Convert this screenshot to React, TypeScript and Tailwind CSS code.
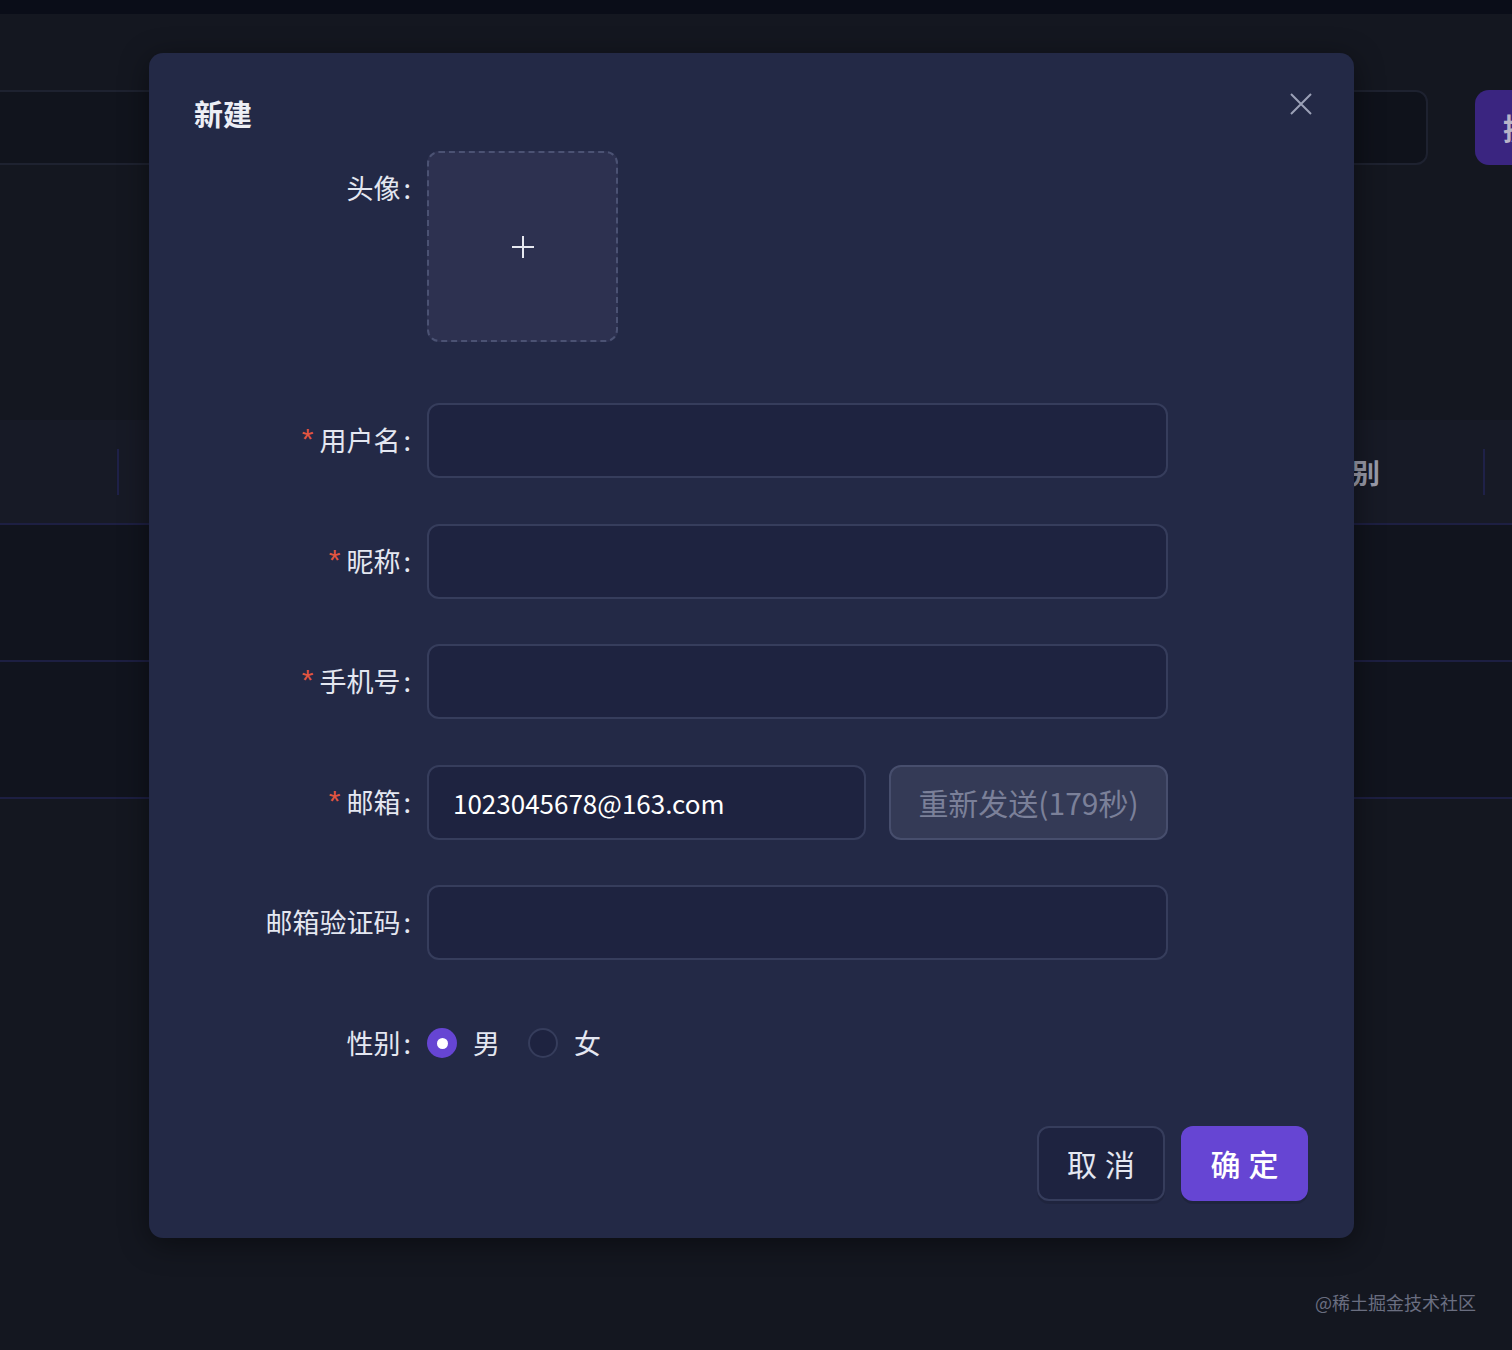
import React from "react";

const font = {
  fontFamily: '"Noto Sans CJK SC", "Noto Sans", sans-serif',
};

const fields = [
  { label: "用户名", required: true },
  { label: "昵称", required: true },
  { label: "手机号", required: true },
];

function Label({ text, required }: { text: string; required?: boolean }) {
  return (
    <div className="flex h-[75px] w-[278px] shrink-0 items-center justify-end pr-[16px] text-[27px] text-[#e4e7f1]">
      {required && (
        <span className="mr-[6px] mt-[-4px] font-['Liberation_Sans',sans-serif] text-[30px] text-[#e25540]">*</span>
      )}
      <span>{text}</span>
      <span className="ml-[3px]">:</span>
    </div>
  );
}

function TextInput({ value }: { value?: string }) {
  return (
    <div className="flex h-[75px] w-full items-center rounded-[12px] border-2 border-[#363d5c] bg-[#1e2340] px-[24px] text-[26px] text-white">
      {value}
    </div>
  );
}

export default function App() {
  return (
    <div className="relative h-[1350px] w-full overflow-hidden bg-[#141720]" style={font}>
      {/* background page (behind the mask) */}
      <div className="h-[14px] bg-[#0a0d18]" />
      <div className="mt-[76px] flex h-[75px] items-stretch">
        <div className="ml-[-20px] w-[700px] rounded-[12px] border-2 border-[#1e2230] bg-[#11141d]" />
        <div className="flex-1" />
        <div className="w-[300px] rounded-[12px] border-2 border-[#1e2230] bg-[#0f121b]" />
        <div className="ml-[47px] mr-[-123px] flex w-[160px] items-center rounded-[14px] bg-[#3a2580] pl-[28px] text-[30px] font-bold text-[#b8b4c8]">
          提交
        </div>
      </div>

      <div className="mt-[255px]">
        <div className="flex h-[105px] items-center justify-between border-b-2 border-[#1d1f42] bg-[#171a26] pl-[117px] pr-[27px] text-[28px] font-bold text-[#9a9cab]">
          <div className="h-[46px] w-[2px] bg-[#1f2148]" />
          <div className="flex items-center gap-[103px]">
            <span>性别</span>
            <div className="h-[46px] w-[2px] bg-[#1f2148]" />
          </div>
        </div>
        <div className="h-[137px] border-b-2 border-[#1d1f42] bg-[#11141e]" />
        <div className="h-[137px] border-b-2 border-[#1d1f42] bg-[#11141e]" />
      </div>

      <div className="absolute bottom-[34px] right-[36px] text-[18px] text-[#6a6e80]">@稀土掘金技术社区</div>

      {/* modal */}
      <div className="absolute inset-0 pl-[149px] pt-[53px]">
        <div className="relative h-[1185px] w-[1205px] rounded-[14px] bg-[#232946] pt-[38px] shadow-[0_6px_30px_rgba(0,0,0,0.45)]">
          <button className="absolute right-[42px] top-[40px] text-[#9ba1b7]" aria-label="close">
            <svg width="22" height="22" viewBox="0 0 22 22" fill="none" stroke="currentColor" strokeWidth="2">
              <path d="M1 1L21 21M21 1L1 21" />
            </svg>
          </button>

          <h2 className="pl-[45px] text-[29px] font-bold leading-[44px] text-[#eceef5]">新建</h2>

          <div className="mt-[16px] flex flex-col">
            <div className="flex items-start">
              <Label text="头像" />
              <div className="flex h-[191px] w-[191px] items-center justify-center rounded-[12px] border-2 border-dashed border-[#4b5273] bg-[#2d3150]">
                <svg width="24" height="24" viewBox="0 0 24 24" fill="none" stroke="#e6e8f0" strokeWidth="2">
                  <path d="M12 1V23M1 12H23" />
                </svg>
              </div>
            </div>

            <div className="mt-[61px] flex flex-col gap-[45.5px] pr-[186px]">
              {fields.map((f) => (
                <div key={f.label} className="flex items-center">
                  <Label text={f.label} required={f.required} />
                  <TextInput />
                </div>
              ))}

              <div className="flex items-center">
                <Label text="邮箱" required />
                <div className="flex w-full gap-[23px]">
                  <div className="w-[439px] shrink-0">
                    <TextInput value="1023045678@163.com" />
                  </div>
                  <button className="flex h-[75px] flex-1 items-center justify-center rounded-[12px] border-2 border-[#474e6d] bg-[#343a56] text-[30px] text-[#7b8099]">
                    重新发送(179秒)
                  </button>
                </div>
              </div>

              <div className="flex items-center">
                <Label text="邮箱验证码" />
                <TextInput />
              </div>

              <div className="flex items-center">
                <Label text="性别" />
                <div className="flex items-center text-[27px] text-[#e4e7f1]">
                  <span className="flex h-[30px] w-[30px] items-center justify-center rounded-full bg-[#6645d3]">
                    <span className="h-[11px] w-[11px] rounded-full bg-white" />
                  </span>
                  <span className="ml-[16px]">男</span>
                  <span className="ml-[28px] h-[30px] w-[30px] rounded-full border-2 border-[#363d5c] bg-[#1e2340]" />
                  <span className="ml-[16px]">女</span>
                </div>
              </div>
            </div>
          </div>

          <div className="absolute bottom-[37px] right-[46px] flex gap-[16px]">
            <button className="h-[75px] w-[128px] rounded-[12px] border-2 border-[#363d5c] bg-[#1e2340] text-[30px] tracking-[8px] text-[#e4e7f1] shadow-[0_3px_0_rgba(0,0,0,0.1)]">
              <span className="ml-[8px]">取消</span>
            </button>
            <button className="h-[75px] w-[127px] rounded-[12px] bg-[#6645d3] text-[30px] font-medium tracking-[8px] text-white shadow-[0_3px_0_rgba(0,0,0,0.12)]">
              <span className="ml-[8px]">确定</span>
            </button>
          </div>
        </div>
      </div>
    </div>
  );
}
